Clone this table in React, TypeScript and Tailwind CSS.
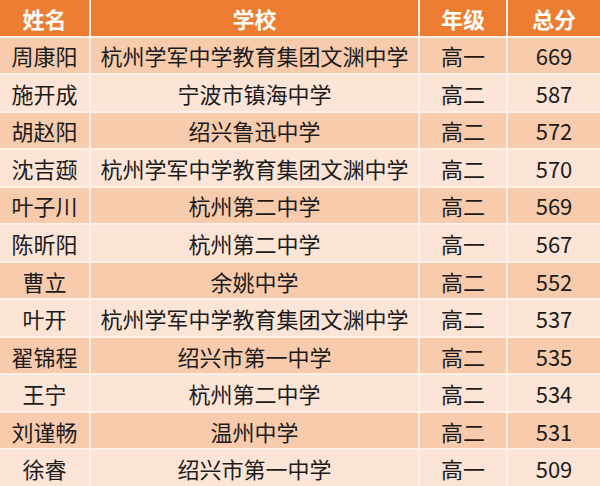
const rows: [string, string, string, string][] = [
  ['周康阳', '杭州学军中学教育集团文渊中学', '高一', '669'],
  ['施开成', '宁波市镇海中学', '高二', '587'],
  ['胡赵阳', '绍兴鲁迅中学', '高二', '572'],
  ['沈吉颋', '杭州学军中学教育集团文渊中学', '高二', '570'],
  ['叶子川', '杭州第二中学', '高二', '569'],
  ['陈昕阳', '杭州第二中学', '高一', '567'],
  ['曹立', '余姚中学', '高二', '552'],
  ['叶开', '杭州学军中学教育集团文渊中学', '高二', '537'],
  ['翟锦程', '绍兴市第一中学', '高二', '535'],
  ['王宁', '杭州第二中学', '高二', '534'],
  ['刘谨畅', '温州中学', '高二', '531'],
  ['徐睿', '绍兴市第一中学', '高一', '509'],
];

const font = { fontFamily: '"Noto Sans CJK SC", "Open Sans", sans-serif' };

export default function App() {
  return (
    <div
      className="grid h-[486px] w-[600px] grid-cols-[89px_327px_86px_1fr] grid-rows-[repeat(13,minmax(0,1fr))] gap-[2px] bg-[#fdf1ea] text-[22px] leading-none text-[#1b1b1b]"
      style={font}
    >
      {['姓名', '学校', '年级', '总分'].map((h) => (
        <div key={h} className="flex items-center justify-center bg-[#ed7d31] font-bold text-white">
          {h}
        </div>
      ))}
      {rows.map((r, i) =>
        r.map((c, j) => (
          <div
            key={`${i}-${j}`}
            className={`flex items-center justify-center ${i % 2 === 0 ? 'bg-[#f8cbad]' : 'bg-[#fce4d6]'}`}
          >
            {c}
          </div>
        )),
      )}
    </div>
  );
}
